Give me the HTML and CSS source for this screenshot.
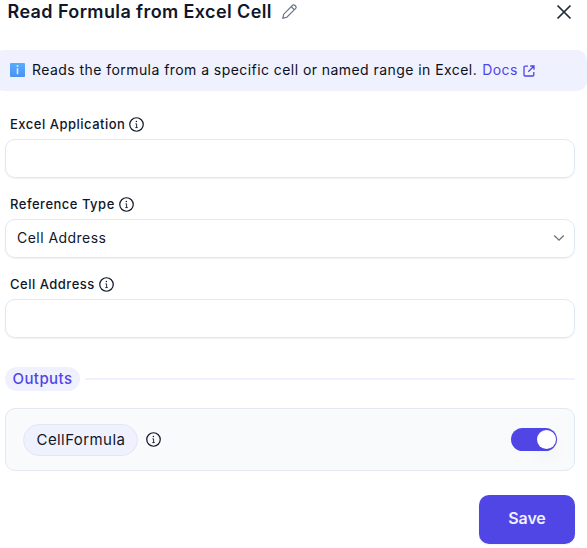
FILE: index.html
```html
<!DOCTYPE html>
<html lang="en">
<head>
<meta charset="utf-8">
<title>Read Formula from Excel Cell</title>
<link rel="stylesheet" href="styles.css">
</head>
<body>
<svg class="defs" width="0" height="0">
  <symbol id="info" viewBox="0 0 14 14">
    <circle cx="7" cy="7" r="6.3" fill="none" stroke="currentColor" stroke-width="1.15"/>
    <circle cx="6.9" cy="4.3" r=".7" fill="currentColor"/>
    <path d="M6 6.4H7.1V9.9M5.9 9.9H8.2" fill="none" stroke="currentColor" stroke-width=".85"/>
  </symbol>
</svg>
<main class="panel">
  <header class="header">
    <h1 class="title">Read Formula from Excel Cell</h1>
    <svg class="pencil" viewBox="0 0 14 14"><path d="M.8 13.2l.8-3.7L9.9 1.2a1.4 1.4 0 0 1 2 0l.9.9a1.4 1.4 0 0 1 0 2L4.5 12.4zM8.6 2.5l2.9 2.9"/></svg>
    <svg class="close" viewBox="0 0 16 16"><path d="M1.5 1.5l13 13M14.5 1.5l-13 13"/></svg>
  </header>
  <div class="banner">
    <span class="badge"><svg viewBox="0 0 15 14"><path d="M7.5 5.2v6"/><circle cx="7.5" cy="3" r="1"/></svg></span>
    <span class="message">Reads the formula from a specific cell or named range in Excel.</span>
    <a class="docs">Docs</a>
    <svg class="external" viewBox="0 0 12 12"><path d="M5 1.2H2A1 1 0 0 0 1 2.2V10A1 1 0 0 0 2 11H9.8A1 1 0 0 0 10.8 10V7M7.2 1H11V4.8M11 1L5.3 6.7"/></svg>
  </div>
  <section class="field">
    <div class="label"><span>Excel Application</span><svg class="info"><use href="#info"/></svg></div>
    <div class="control"></div>
  </section>
  <section class="field">
    <div class="label"><span>Reference Type</span><svg class="info"><use href="#info"/></svg></div>
    <div class="control"><span class="value">Cell Address</span><svg class="chevron" viewBox="0 0 12 8"><path d="M1.2 1.5L6 6.2l4.8-4.7"/></svg></div>
  </section>
  <section class="field">
    <div class="label"><span>Cell Address</span><svg class="info"><use href="#info"/></svg></div>
    <div class="control"></div>
  </section>
  <div class="divider"><span class="outputs">Outputs</span><span class="line"></span></div>
  <div class="card">
    <span class="chip">CellFormula</span>
    <svg class="info"><use href="#info"/></svg>
    <span class="toggle"><span class="knob"></span></span>
  </div>
  <button class="save">Save</button>
</main>
</body>
</html>
```

FILE: styles.css
```css
* { box-sizing: border-box; }
body {
  margin: 0;
  width: 587px;
  height: 548px;
  overflow: hidden;
  background: #fff;
  color: #0f172a;
  font-family: Inter, sans-serif;
}
svg { display: block; flex: none; fill: none; stroke: currentColor; }
.defs { position: absolute; }
.panel { display: flex; flex-direction: column; height: 548px; }
.header { display: flex; align-items: center; height: 24px; padding: 0 15px 0 7.5px; }
.title { margin: 0; font-size: 18px; line-height: 24px; font-weight: 600; white-space: nowrap; letter-spacing: .39px; }
.pencil { width: 15px; height: 15px; margin: -2px 0 0 10px; color: #64748b; stroke-width: 1.1; }
.close { width: 16px; height: 16px; margin-left: auto; color: #1e293b; stroke-width: 1.7; }
.banner {
  display: flex;
  align-items: center;
  height: 41px;
  margin: 26px 0 0 -6px;
  padding: 0 0 2px 16px;
  border-radius: 10px;
  background: #f0f1ff;
  color: #0b1020;
  font-size: 14px;
  white-space: nowrap;
  letter-spacing: .44px;
}
.badge { width: 15px; height: 14px; margin-right: 7px; border-radius: 1px; background: linear-gradient(#58adff, #4a92f0); color: #d8ecff; }
.badge svg { width: 15px; height: 14px; stroke-width: 1.6; }
.badge circle { fill: #d8ecff; stroke: none; }
.docs { margin-left: 5px; color: #4f46e5; }
.external { width: 12px; height: 12px; margin: 3px 0 0 5px; color: #4f46e5; stroke-width: 1.3; }
.field { height: 80px; padding: 0 12px 0 5px; }
.banner + .field { margin-top: 24px; }
.label { display: flex; align-items: center; gap: 4px; height: 20px; padding: 0 0 2px 5px; font-size: 13px; font-weight: 500; letter-spacing: .5px; }
.info { width: 15px; height: 15px; stroke: none; }
.control {
  display: flex;
  align-items: center;
  justify-content: space-between;
  height: 39px;
  margin-top: 4px;
  padding: 0 9px 2px 11px;
  border: 1px solid #e2e8f0;
  border-radius: 10px;
  box-shadow: 0 1px 2px rgba(15, 23, 42, .06);
  font-size: 14px;
  letter-spacing: .46px;
}
.chevron { width: 12px; height: 8px; margin-top: 1px; color: #71717a; stroke-width: 1.3; }
.divider { display: flex; align-items: center; gap: 5px; height: 24px; margin: 12px 12px 0 5px; }
.outputs { width: 75px; height: 24px; padding-left: 7.5px; border-radius: 12px; background: #f0f1ff; color: #4f46e5; font-size: 15px; line-height: 24px; font-weight: 500; letter-spacing: .42px; }
.line { flex: 1; height: 2px; background: #f0f1ff; }
.card { display: flex; align-items: center; height: 63px; margin: 17px 12px 0 5px; padding: 0 17px; border: 1px solid #e2e8f0; border-radius: 10px; background: #f8fafc; }
.chip { width: 115px; height: 32px; padding-left: 12.5px; margin-right: 8px; border: 1px solid #e2e8f0; border-radius: 16px; background: #f0f1ff; font-size: 15px; line-height: 30px; letter-spacing: .42px; }
.toggle { display: flex; align-items: center; justify-content: flex-end; width: 46px; height: 23px; margin-left: auto; padding-right: 1px; border-radius: 12px; background: #4f46e5; }
.knob { width: 19px; height: 19px; border-radius: 50%; background: #fff; box-shadow: 0 10px 15px rgba(0, 0, 0, .04); }
.save { align-self: flex-end; width: 96px; height: 49px; margin: 24px 12px 0 0; padding: 0 0 3px; border: 0; border-radius: 10px; background: #4f46e5; color: #eef0ff; font: 600 16px Inter, sans-serif; letter-spacing: -.1px; box-shadow: 0 1px 2px rgba(15, 23, 42, .06); }
```
